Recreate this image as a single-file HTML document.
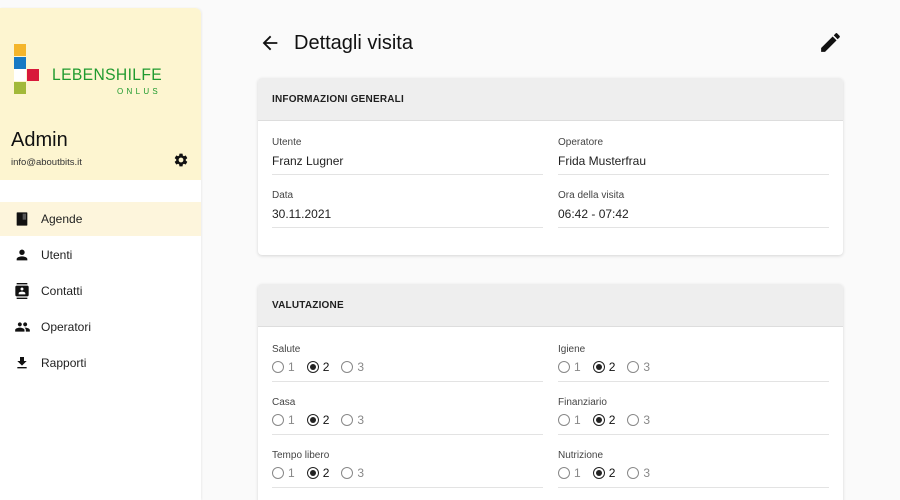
<!DOCTYPE html>
<html><head><meta charset="utf-8"><style>
*{box-sizing:border-box;margin:0;padding:0}
html,body{width:900px;height:500px;overflow:hidden}
body{background:#fafafa;font-family:"Liberation Sans",Arial,sans-serif;color:#1f1f1f;position:relative}
.side{position:absolute;left:0;top:8px;width:201px;height:492px;background:#fff;border-top-right-radius:6px;overflow:hidden;box-shadow:1px 0 2px rgba(0,0,0,.06)}
.top{height:172px;background:#fdf5d0;position:relative}
.sq{position:absolute;width:12px;height:12px}
.nav{position:absolute;left:0;width:201px;height:34px;font-size:12px;display:flex;align-items:center}
.nav svg{position:absolute;left:14px}
.nav span{position:absolute;left:41px}
.card{position:absolute;left:258px;width:585px;background:#fff;border-radius:4px;box-shadow:0 1px 3px rgba(0,0,0,.15);overflow:hidden}
.hd{height:43px;background:#eeeeee;border-bottom:1px solid #ddd;font-size:10px;font-weight:bold;padding-left:14px;line-height:43px;letter-spacing:.2px}
.f{position:absolute;width:271px;border-bottom:1px solid #e3e3e3}
.lb{font-size:10px;color:#444;position:absolute}
.v{font-size:12px;position:absolute}
.r{position:absolute;font-size:12px;color:#888;display:flex;align-items:center}
.c{width:12px;height:12px;border:1px solid #888;border-radius:50%;display:inline-block;margin-right:4px;position:relative}
.c.on{border-color:#222}
.c.on:after{content:"";position:absolute;left:2px;top:2px;width:6px;height:6px;border-radius:50%;background:#222}
.g{display:inline-block;width:12px}
</style></head><body>
<div class="side">
 <div class="top">
  <div class="sq" style="left:14px;top:36px;background:#f4b52b"></div>
  <div class="sq" style="left:14px;top:49px;background:#1679c4"></div>
  <div class="sq" style="left:14px;top:61px;background:#fff"></div>
  <div class="sq" style="left:27px;top:61px;background:#d8193a"></div>
  <div class="sq" style="left:14px;top:74px;background:#a2b93a"></div>
  <div style="position:absolute;left:52px;top:57px;font-size:17px;color:#1f9a2e;letter-spacing:0.4px;transform:scaleX(0.92);transform-origin:left">LEBENSHILFE</div>
  <div style="position:absolute;left:117px;top:79px;font-size:8px;color:#1f9a2e;letter-spacing:3.3px">ONLUS</div>
  <div style="position:absolute;left:11px;top:121px;font-size:20px;color:#111">Admin</div>
  <div style="position:absolute;left:11px;top:149px;font-size:9.5px;color:#333">info@aboutbits.it</div>
  <svg style="position:absolute;left:173px;top:144px" width="16" height="16" viewBox="0 0 24 24"><path fill="#111" d="M19.14 12.94c.04-.3.06-.61.06-.94s-.02-.64-.07-.94l2.03-1.58a.49.49 0 0 0 .12-.61l-1.92-3.320a.49.49 0 0 0-.59-.22l-2.39.96c-.5-.38-1.030-.7-1.62-.94l-.36-2.54a.48.48 0 0 0-.48-.41h-3.84c-.24 0-.43.17-.47.41l-.36 2.54c-.59.24-1.13.57-1.62.94l-2.39-.96a.48.48 0 0 0-.59.22L2.74 8.87c-.12.21-.08.47.12.61l2.03 1.58c-.05.3-.09.63-.09.94s.02.64.07.94l-2.03 1.58a.49.49 0 0 0-.12.61l1.92 3.32c.12.22.37.29.59.22l2.39-.96c.5.38 1.030.7 1.62.94l.36 2.54c.05.24.24.41.48.41h3.84c.24 0 .44-.17.47-.41l.36-2.54c.59-.24 1.13-.56 1.62-.94l2.39.96c.22.08.47 0 .59-.22l1.92-3.32c.12-.22.07-.47-.12-.61l-2.010-1.58zM12 15.6a3.6 3.6 0 1 1 0-7.2 3.6 3.6 0 0 1 0 7.2z"/></svg>
 </div>
 <div class="nav" style="top:194px;background:#fdf5dc"><svg width="16" height="16" viewBox="0 0 24 24"><rect x="4" y="2" width="16" height="20" rx="1" fill="#111"/><rect x="13" y="4" width="5" height="9" fill="#555"/></svg><span>Agende</span></div>
 <div class="nav" style="top:230px"><svg width="16" height="16" viewBox="0 0 24 24"><path fill="#111" d="M12 12c2.21 0 4-1.79 4-4s-1.79-4-4-4-4 1.79-4 4 1.79 4 4 4zm0 2c-2.67 0-8 1.34-8 4v2h16v-2c0-2.66-5.33-4-8-4z"/></svg><span>Utenti</span></div>
 <div class="nav" style="top:266px"><svg width="16" height="16" viewBox="0 0 24 24"><path fill="#111" d="M20 0H4v2h16V0zM4 24h16v-2H4v2zM20 4H4c-1.1 0-2 .9-2 2v12c0 1.1.9 2 2 2h16c1.1 0 2-.9 2-2V6c0-1.1-.9-2-2-2zm-8 2.75c1.24 0 2.25 1.01 2.25 2.25s-1.01 2.25-2.25 2.25S9.75 10.24 9.75 9 10.76 6.75 12 6.75zM17 17H7v-1.5c0-1.67 3.33-2.5 5-2.5s5 .83 5 2.5V17z"/></svg><span>Contatti</span></div>
 <div class="nav" style="top:302px"><svg width="17" height="16" viewBox="0 0 24 24"><path fill="#111" d="M16 11c1.66 0 2.99-1.34 2.99-3S17.66 5 16 5c-1.66 0-3 1.34-3 3s1.34 3 3 3zm-8 0c1.66 0 2.99-1.34 2.99-3S9.66 5 8 5C6.34 5 5 6.34 5 8s1.34 3 3 3zm0 2c-2.33 0-7 1.17-7 3.5V19h14v-2.5c0-2.33-4.67-3.5-7-3.5zm8 0c-.29 0-.62.02-.97.05 1.16.84 1.97 1.97 1.97 3.45V19h6v-2.5c0-2.33-4.67-3.5-7-3.5z"/></svg><span>Operatori</span></div>
 <div class="nav" style="top:338px"><svg width="16" height="16" viewBox="0 0 24 24"><path fill="#111" d="M19 9h-4V3H9v6H5l7 7 7-7zM5 18v2h14v-2H5z"/></svg><span>Rapporti</span></div>
</div>

<svg style="position:absolute;left:259px;top:32px" width="22" height="22" viewBox="0 0 24 24"><path fill="#111" d="M20 11H7.83l5.59-5.59L12 4l-8 8 8 8 1.41-1.41L7.83 13H20v-2z"/></svg>
<div style="position:absolute;left:294px;top:32px;font-size:20px;color:#111">Dettagli visita</div>
<svg style="position:absolute;left:818px;top:30px" width="25" height="25" viewBox="0 0 24 24"><path fill="#111" d="M3 17.25V21h3.75L17.81 9.94l-3.75-3.75L3 17.25zM20.71 7.04a1 1 0 0 0 0-1.41l-2.34-2.34a1 1 0 0 0-1.41 0l-1.83 1.83 3.75 3.75 1.83-1.83z"/></svg>

<div class="card" style="top:78px;height:177px">
 <div class="hd">INFORMAZIONI GENERALI</div>
 <div class="f" style="left:14px;top:44px;height:53px"><div class="lb" style="top:15px">Utente</div><div class="v" style="top:32px">Franz Lugner</div></div>
 <div class="f" style="left:300px;top:44px;height:53px"><div class="lb" style="top:15px">Operatore</div><div class="v" style="top:32px">Frida Musterfrau</div></div>
 <div class="f" style="left:14px;top:97px;height:53px"><div class="lb" style="top:15px">Data</div><div class="v" style="top:32px">30.11.2021</div></div>
 <div class="f" style="left:300px;top:97px;height:53px"><div class="lb" style="top:15px">Ora della visita</div><div class="v" style="top:32px">06:42 - 07:42</div></div>
</div>

<div class="card" style="top:284px;height:230px">
 <div class="hd">VALUTAZIONE</div>
 <div class="f" style="left:14px;top:44px;height:54px"><div class="lb" style="top:16px">Salute</div><div class="r" style="top:32px"><i class="c"></i>1<i class="g"></i><i class="c on"></i><b style="font-weight:normal;color:#111">2</b><i class="g"></i><i class="c"></i>3</div></div>
 <div class="f" style="left:300px;top:44px;height:54px"><div class="lb" style="top:16px">Igiene</div><div class="r" style="top:32px"><i class="c"></i>1<i class="g"></i><i class="c on"></i><b style="font-weight:normal;color:#111">2</b><i class="g"></i><i class="c"></i>3</div></div>
 <div class="f" style="left:14px;top:98px;height:53px"><div class="lb" style="top:15px">Casa</div><div class="r" style="top:31px"><i class="c"></i>1<i class="g"></i><i class="c on"></i><b style="font-weight:normal;color:#111">2</b><i class="g"></i><i class="c"></i>3</div></div>
 <div class="f" style="left:300px;top:98px;height:53px"><div class="lb" style="top:15px">Finanziario</div><div class="r" style="top:31px"><i class="c"></i>1<i class="g"></i><i class="c on"></i><b style="font-weight:normal;color:#111">2</b><i class="g"></i><i class="c"></i>3</div></div>
 <div class="f" style="left:14px;top:151px;height:53px"><div class="lb" style="top:15px">Tempo libero</div><div class="r" style="top:31px"><i class="c"></i>1<i class="g"></i><i class="c on"></i><b style="font-weight:normal;color:#111">2</b><i class="g"></i><i class="c"></i>3</div></div>
 <div class="f" style="left:300px;top:151px;height:53px"><div class="lb" style="top:15px">Nutrizione</div><div class="r" style="top:31px"><i class="c"></i>1<i class="g"></i><i class="c on"></i><b style="font-weight:normal;color:#111">2</b><i class="g"></i><i class="c"></i>3</div></div>
</div>
</body></html>
